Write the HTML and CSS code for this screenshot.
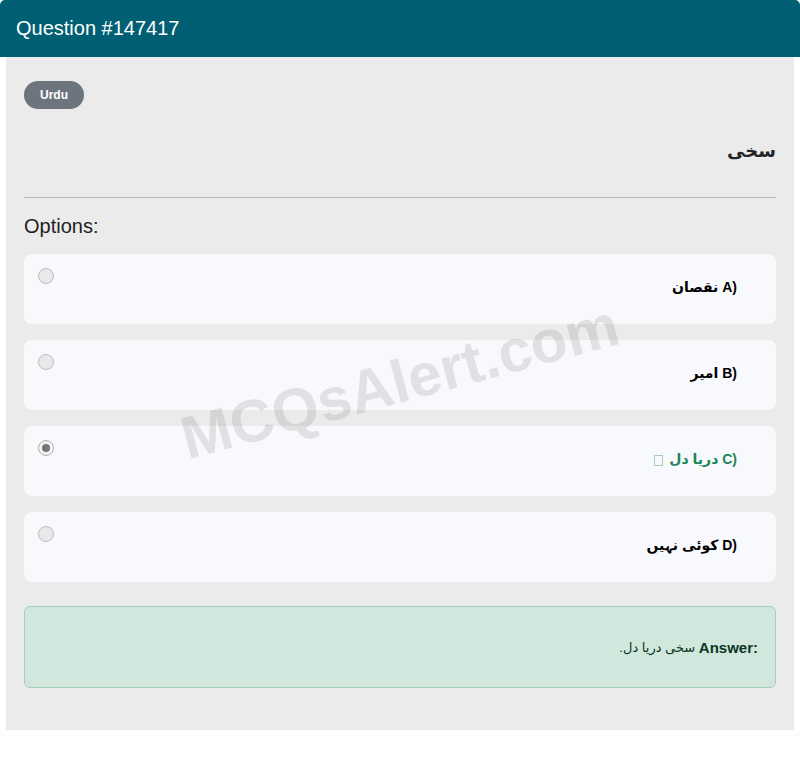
FILE: index.html
```html
<!DOCTYPE html>
<html lang="en">
<head>
<meta charset="utf-8">
<title>Question #147417</title>
<link rel="stylesheet" href="styles.css">
</head>
<body>
<div class="card">
  <div class="card-header">Question #147417</div>
  <div class="card-body">
    <span class="badge">Urdu</span>
    <h5 class="question" dir="rtl">سخی</h5>
    <hr class="divider">
    <h6 class="options-title">Options:</h6>
    <div class="options">
      <div class="option">
        <span class="radio"></span>
        <div class="option-label" dir="rtl"><bdi>A)</bdi> نقصان</div>
      </div>
      <div class="option">
        <span class="radio"></span>
        <div class="option-label" dir="rtl"><bdi>B)</bdi> امیر</div>
      </div>
      <div class="option">
        <span class="radio checked"></span>
        <div class="option-label correct" dir="rtl"><bdi>C)</bdi> دریا دل <span class="check-icon"></span></div>
      </div>
      <div class="option">
        <span class="radio"></span>
        <div class="option-label" dir="rtl"><bdi>D)</bdi> کوئی نہیں</div>
      </div>
    </div>
    <div class="answer" dir="rtl"><bdi class="answer-key">Answer:</bdi> سخی دریا دل.</div>
  </div>
  <div class="watermark">MCQsAlert.com</div>
</div>
</body>
</html>
```
FILE: styles.css
```css
html, body {
  margin: 0;
  padding: 0;
  background: #ffffff;
}
body {
  font-family: "Liberation Sans", "DejaVu Sans", sans-serif;
  color: #212529;
}
.card {
  position: relative;
  width: 800px;
  background: #ffffff;
  border-radius: 5px 5px 6px 6px;
  padding-bottom: 6px;
  box-shadow: 0 1px 2px rgba(0,0,0,0.06);
  overflow: hidden;
}
.card-header {
  height: 57px;
  box-sizing: border-box;
  background: #005f73;
  color: #ffffff;
  font-size: 20px;
  line-height: 57px;
  padding-left: 16px;
}
.card-body {
  margin: 0 6px;
  background: #ebebeb;
  padding: 24px 18px 42px;
}
.badge {
  display: inline-block;
  height: 28px;
  line-height: 28px;
  padding: 0 16px;
  border-radius: 14px;
  background: #6c757d;
  color: #ffffff;
  font-size: 12px;
  font-weight: bold;
}
.question {
  margin: 30px 0 0;
  font-size: 18px;
  line-height: 24px;
  font-weight: bold;
  color: #212529;
  text-align: right;
}
.divider {
  margin: 34px 0 0;
  border: 0;
  border-top: 1px solid #b9b9b9;
  height: 0;
}
.options-title {
  margin: 16px 0 0;
  font-size: 20px;
  line-height: 24px;
  font-weight: normal;
  color: #222222;
}
.options {
  margin-top: 16px;
  display: flex;
  flex-direction: column;
  gap: 16px;
}
.option {
  display: flex;
  align-items: flex-start;
  height: 70px;
  box-sizing: border-box;
  background: #f8f9fc;
  border-radius: 8px;
  padding: 14px 39px 0 14px;
}
.radio {
  flex: none;
  width: 14px;
  height: 14px;
  border: 1px solid #bcbcbc;
  border-radius: 50%;
  background: #e9e9e9;
  position: relative;
}
.radio.checked {
  background: #f3f3f3;
  border-color: #b0b0b0;
}
.radio.checked::after {
  content: "";
  position: absolute;
  left: 3px;
  top: 3px;
  width: 8px;
  height: 8px;
  border-radius: 50%;
  background: #767676;
}
.option-label {
  flex: 1;
  padding-top: 11px;
  font-size: 14px;
  line-height: 17px;
  font-weight: bold;
  color: #000000;
  text-align: right;
}
.option-label.correct {
  color: #198754;
}
.check-icon {
  display: inline-block;
  width: 7px;
  height: 9px;
  border: 1px solid #a8cdb9;
  vertical-align: -2px;
  margin-right: 2px;
}
.answer {
  margin-top: 24px;
  height: 82px;
  box-sizing: border-box;
  background: #d1e7dd;
  border: 1px solid #a3cfbb;
  border-radius: 6px;
  padding: 0 17px;
  display: flex;
  align-items: center;
  justify-content: flex-start;
  font-size: 13px;
  color: #0a3622;
  white-space: pre;
}
.answer-key {
  font-size: 15px;
  font-weight: bold;
}
.watermark {
  position: absolute;
  left: 170px;
  top: 347px;
  width: 460px;
  text-align: center;
  font-family: "Liberation Sans", sans-serif;
  font-size: 60px;
  font-weight: bold;
  line-height: 70px;
  color: rgba(120, 120, 120, 0.19);
  transform: rotate(-15deg);
  pointer-events: none;
  white-space: nowrap;
}
```
